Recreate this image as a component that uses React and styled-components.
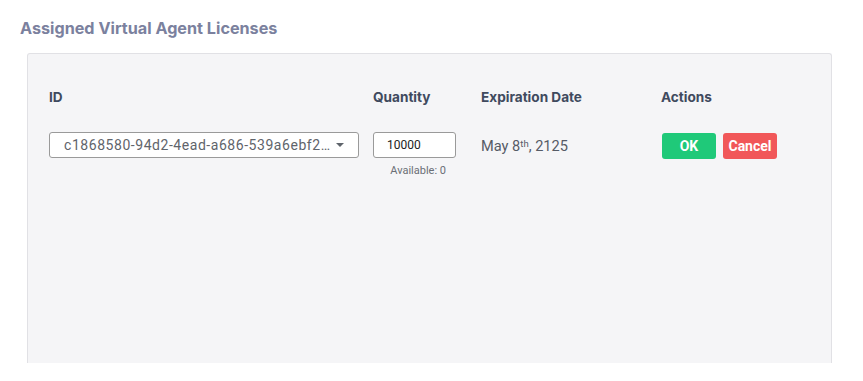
import styled, { createGlobalStyle } from "styled-components";

const GlobalStyle = createGlobalStyle`
  body {
    margin: 0;
    background: #ffffff;
    font-family: Roboto, "Liberation Sans", sans-serif;
  }
`;

const Page = styled.div`
  padding: 18px 0 0 20px;
  width: 863px;
  height: 381px;
  box-sizing: border-box;
  overflow: hidden;
`;

const Title = styled.h2`
  margin: 0 0 15px 0;
  font-family: Inter, "Liberation Sans", sans-serif;
  font-size: 16.2px;
  line-height: 20px;
  font-weight: 700;
  color: #7b819e;
`;

const Panel = styled.div`
  margin-left: 7px;
  width: 805px;
  height: 310px;
  box-sizing: border-box;
  background: #f5f5f7;
  border: 1px solid #e1e1e5;
  border-bottom: none;
  border-radius: 3px 3px 0 0;
  padding: 33px 21px 0;
`;

const Grid = styled.div`
  display: grid;
  grid-template-columns: 324px 108px 180px auto;
  align-items: start;
`;

const HeadCell = styled.div`
  font-family: Inter, "Liberation Sans", sans-serif;
  font-size: 13.6px;
  line-height: 20px;
  font-weight: 700;
  color: #3f4a5e;
  margin-bottom: 25px;
`;

const Cell = styled.div`
  display: flex;
  flex-direction: column;
  align-items: flex-start;
  width: ${(p) => p.$width || "auto"};
`;

const Select = styled.div`
  display: flex;
  align-items: center;
  justify-content: space-between;
  width: 310px;
  height: 26px;
  box-sizing: border-box;
  padding: 0 14px 0 14px;
  background: #ffffff;
  border: 1px solid #9a9a9a;
  border-radius: 3px;
  font-size: 14px;
  color: #5f646b;
  letter-spacing: 0.55px;
`;

const SelectText = styled.span`
  white-space: nowrap;
`;

const Caret = styled.span`
  flex: none;
  width: 0;
  height: 0;
  margin-left: 2px;
  border-left: 4px solid transparent;
  border-right: 4px solid transparent;
  border-top: 4px solid #5f646b;
`;

const Input = styled.input`
  width: 83px;
  height: 26px;
  box-sizing: border-box;
  padding: 0 0 0 13px;
  border: 1px solid #9a9a9a;
  border-radius: 3px;
  background: #ffffff;
  font-family: Roboto, "Liberation Sans", sans-serif;
  font-size: 12px;
  color: #222;
  outline: none;
`;

const Hint = styled.div`
  align-self: flex-end;
  margin: 6px 10px 0 0;
  font-size: 11px;
  color: #6b6f76;
`;

const DateText = styled.div`
  height: 26px;
  line-height: 29px;
  font-size: 14.6px;
  color: #555b66;

  sup {
    font-size: 9.5px;
    vertical-align: 4px;
    line-height: 0;
  }
`;

const Actions = styled.div`
  display: flex;
  gap: 7px;
  padding: 1px 0 0 1px;
`;

const Button = styled.button`
  width: 54px;
  height: 26px;
  border: none;
  border-radius: 3px;
  background: ${(p) => (p.$variant === "danger" ? "#f15759" : "#1fc979")};
  color: #ffffff;
  font-family: Roboto, "Liberation Sans", sans-serif;
  font-size: 14px;
  font-weight: 700;
  padding: 0;
  cursor: pointer;
`;

export default function App() {
  return (
    <>
      <GlobalStyle />
      <Page>
        <Title>Assigned Virtual Agent Licenses</Title>
        <Panel>
          <Grid>
            <HeadCell>ID</HeadCell>
            <HeadCell>Quantity</HeadCell>
            <HeadCell>Expiration Date</HeadCell>
            <HeadCell>Actions</HeadCell>

            <Cell>
              <Select>
                <SelectText>c1868580-94d2-4ead-a686-539a6ebf2…</SelectText>
                <Caret />
              </Select>
            </Cell>
            <Cell $width="83px">
              <Input defaultValue="10000" />
              <Hint>Available: 0</Hint>
            </Cell>
            <Cell>
              <DateText>
                May 8<sup>th</sup>, 2125
              </DateText>
            </Cell>
            <Cell>
              <Actions>
                <Button>OK</Button>
                <Button $variant="danger">Cancel</Button>
              </Actions>
            </Cell>
          </Grid>
        </Panel>
      </Page>
    </>
  );
}
